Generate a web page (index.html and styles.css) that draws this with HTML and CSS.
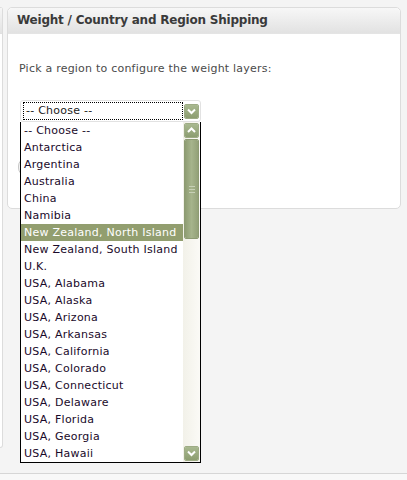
FILE: index.html
```html
<!DOCTYPE html>
<html lang="en">
<head>
    <meta charset="UTF-8">
    <title>Weight / Country and Region Shipping</title>
    <link rel="stylesheet" href="styles.css">
</head>
<body>
    <div class="page">
        <div class="side">
            <div class="side-head"></div>
        </div>

        <div class="panel">
            <div class="panel-head">Weight / Country and Region Shipping</div>
            <div class="panel-body">
                <p class="hint">Pick a region to configure the weight layers:</p>

                <div class="picker">
                    <div class="select">
                        <span class="select-value">-- Choose --</span>
                        <span class="btn">
                            <svg width="11" height="11" viewBox="0 0 11 11"><path d="M2 3.5 L5.5 7 L9 3.5" fill="none" stroke="#fff" stroke-width="2"/></svg>
                        </span>
                    </div>

                    <!-- button edge, mostly hidden behind the open list -->
                    <div class="go"></div>

                    <div class="list">
                        <ul class="options">
                            <li>-- Choose --</li>
                            <li>Antarctica</li>
                            <li>Argentina</li>
                            <li>Australia</li>
                            <li>China</li>
                            <li>Namibia</li>
                            <li class="active">New Zealand, North Island</li>
                            <li>New Zealand, South Island</li>
                            <li>U.K.</li>
                            <li>USA, Alabama</li>
                            <li>USA, Alaska</li>
                            <li>USA, Arizona</li>
                            <li>USA, Arkansas</li>
                            <li>USA, California</li>
                            <li>USA, Colorado</li>
                            <li>USA, Connecticut</li>
                            <li>USA, Delaware</li>
                            <li>USA, Florida</li>
                            <li>USA, Georgia</li>
                            <li>USA, Hawaii</li>
                        </ul>
                        <div class="scroll">
                            <span class="btn">
                                <svg width="11" height="11" viewBox="0 0 11 11"><path d="M2 7 L5.5 3.5 L9 7" fill="none" stroke="#fff" stroke-width="2"/></svg>
                            </span>
                            <div class="thumb">
                                <span class="grip"></span>
                            </div>
                            <div class="track"></div>
                            <span class="btn">
                                <svg width="11" height="11" viewBox="0 0 11 11"><path d="M2 3.5 L5.5 7 L9 3.5" fill="none" stroke="#fff" stroke-width="2"/></svg>
                            </span>
                        </div>
                    </div>
                </div>
            </div>
        </div>
    </div>
    <div class="footer"></div>
</body>
</html>
```

FILE: styles.css
```css
body {
    margin: 0;
    background-color: #f4f4f4;
    font-family: "DejaVu Sans", Verdana, sans-serif;
    font-size: 11px;
    color: #111;
}

.page {
    display: flex;
    align-items: flex-start;
    gap: 4px;
    padding-top: 7px;
    height: 473px;
    box-sizing: border-box;
}

.side {
    width: 2px;
    height: 439px;
    border: 1px solid #dcdcdc;
    border-left: none;
    border-radius: 0 5px 5px 0;
    background-color: #fff;
}

.side-head {
    height: 25px;
    background: linear-gradient(#f6f6f6, #e3e3e3);
    border-bottom: 1px solid #e0e0e0;
}

.panel {
    width: 392px;
    height: 200px;
    border: 1px solid #dcdcdc;
    border-radius: 5px;
    background-color: #fff;
}

.panel-head {
    height: 25px;
    line-height: 24px;
    padding-left: 9px;
    background: linear-gradient(#f7f7f7, #e2e2e2);
    border-bottom: 1px solid #e4e4e4;
    border-radius: 5px 5px 0 0;
    font-size: 12px;
    font-weight: bold;
    letter-spacing: -0.22px;
    color: #3a3a3a;
}

.panel-body {
    padding: 0 11px;
}

.hint {
    margin: 28px 0 0;
    line-height: 13px;
    letter-spacing: 0.22px;
    color: #4a4a4a;
}

.picker {
    position: relative;
    margin-top: 25px;
    margin-left: 1px;
    width: 181px;
}

.select {
    display: flex;
    align-items: center;
    height: 22px;
    padding: 1px;
    border: 1px solid #e2e2e2;
    border-radius: 3px;
    background-color: #fff;
    box-sizing: border-box;
}

.select-value {
    flex: 1;
    height: 16px;
    line-height: 16px;
    margin-left: 1px;
    padding-left: 2px;
    border: 1px dotted #000;
    letter-spacing: 0.25px;
    color: #222;
}

.btn {
    display: flex;
    align-items: center;
    justify-content: center;
    width: 15px;
    height: 15px;
    margin-left: 1px;
    background: linear-gradient(#a9b990, #8c9d70);
    border: 1px solid #e8ecdf;
    outline: 1px solid #9eac85;
    outline-offset: -1px;
    box-sizing: border-box;
    border-radius: 2px;
}

.go {
    width: 60px;
    height: 16px;
    margin: 36px 0 0 -2px;
    border: 1px solid #c8c8c8;
    border-radius: 8px;
    background-color: #f2f2f2;
}

.list {
    position: absolute;
    top: 22px;
    left: 0;
    width: 179px;
    height: 340px;
    display: flex;
    border: 1px solid #000;
    border-top: none;
    background-color: #fff;
}

.options {
    flex: 1;
    margin: 0;
    padding: 0;
    list-style: none;
}

.options li {
    height: 17px;
    line-height: 17px;
    padding-left: 3px;
    white-space: nowrap;
    letter-spacing: 0.25px;
    color: #1a0a2a;
}

.options li.active {
    background-color: #929e6f;
    color: #fff;
}

.scroll {
    display: flex;
    flex-direction: column;
    width: 17px;
    padding: 1px 0;
    background: linear-gradient(to right, #f2f1e9, #fbfaf6);
    box-sizing: border-box;
}

.scroll .btn {
    margin: 0 1px;
}

.thumb {
    display: flex;
    align-items: center;
    justify-content: center;
    height: 98px;
    margin: 1px 1px 0;
    background: linear-gradient(to right, #8e9c72, #a6b48c, #93a178);
    border: 1px solid #f0f2ea;
    outline: 1px solid #8d9b73;
    outline-offset: -1px;
    border-radius: 2px;
}

.grip {
    width: 6px;
    height: 5px;
    border-top: 1px solid #c7d0b6;
    border-bottom: 1px solid #c7d0b6;
    background: linear-gradient(transparent 2px, #c7d0b6 2px, #c7d0b6 3px, transparent 3px);
}

.track {
    flex: 1;
}

.footer {
    height: 7px;
    border-top: 1px solid #d6d6d6;
    background-color: #f8f8f8;
}
```
